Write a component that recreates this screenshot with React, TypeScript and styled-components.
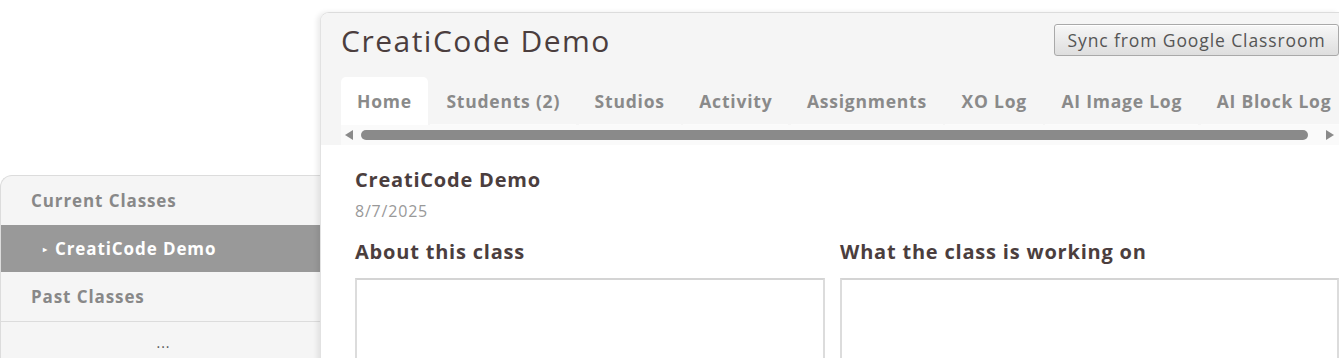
import React from "react";
import styled, { createGlobalStyle } from "styled-components";

const Global = createGlobalStyle`
  html, body { margin: 0; padding: 0; background: #fff; }
  body { font-family: "Open Sans", "Noto Sans", sans-serif; overflow: hidden; }
  * { box-sizing: border-box; }
`;

const Page = styled.div`
  display: flex;
  align-items: flex-start;
  width: 1339px;
  height: 358px;
  overflow: hidden;
`;

const Sidebar = styled.nav`
  width: 320px;
  flex: none;
  margin-top: 175px;
  background: #f5f5f5;
  border-top: 1px solid #dcdcdc;
  border-left: 1px solid #dcdcdc;
  border-top-left-radius: 12px;
  display: flex;
  flex-direction: column;
`;

const SideRow = styled.div<{ $active?: boolean; $h: number; $center?: boolean; $line?: boolean }>`
  height: ${(p) => p.$h}px;
  display: flex;
  align-items: center;
  justify-content: ${(p) => (p.$center ? "center" : "flex-start")};
  padding-left: ${(p) => (p.$center ? 0 : p.$active ? 42 : 30)}px;
  background: ${(p) => (p.$active ? "#999999" : "transparent")};
  color: ${(p) => (p.$active ? "#ffffff" : "#888888")};
  font-weight: 700;
  font-size: 17px;
  letter-spacing: 0.9px;
  border-bottom: ${(p) => (p.$line ? "1px solid #dcdcdc" : "none")};
`;

const Bullet = styled.span`
  font-size: 8px;
  margin-right: 8px;
  letter-spacing: 0;
  color: #fff;
`;

const Dots = styled.span`
  font-weight: 400;
  color: #555;
  font-size: 14px;
  letter-spacing: 1px;
  margin-left: 6px;
`;

const Main = styled.main`
  flex: 1;
  margin-top: 12px;
  min-width: 0;
  background: #fff;
  border-top: 1px solid #dcdcdc;
  border-left: 1px solid #e2e2e2;
  border-top-left-radius: 9px;
  box-shadow: -3px 0 5px rgba(0, 0, 0, 0.08);
  overflow: hidden;
  position: relative;
  z-index: 1;
`;

const Header = styled.header`
  background: #f5f5f5;
  padding-left: 20px;
`;

const TitleRow = styled.div`
  height: 64px;
  display: flex;
  align-items: flex-start;
  justify-content: space-between;
`;

const Title = styled.h1`
  margin: 9px 0 0;
  font-size: 30px;
  font-weight: 400;
  letter-spacing: 1.5px;
  color: #4b3e3e;
  line-height: 38px;
`;

const SyncButton = styled.button`
  margin-top: 11px;
  height: 32px;
  width: 285px;
  flex: none;
  border: 1px solid #a9a9a9;
  border-radius: 3px;
  background: linear-gradient(#f7f7f7, #dedede);
  font-family: inherit;
  font-size: 17.5px;
  color: #555;
  letter-spacing: 0.9px;
  padding: 0;
  box-shadow: inset 0 1px 0 #fff;
`;

const Tabs = styled.div`
  display: flex;
  gap: 2.5px;
  height: 48px;
  white-space: nowrap;
`;

const Tab = styled.div<{ $active?: boolean }>`
  padding: 0 16px;
  display: flex;
  align-items: center;
  font-size: 17.5px;
  font-weight: 700;
  letter-spacing: 0.78px;
  color: #8a8a8a;
  background: ${(p) => (p.$active ? "#ffffff" : "transparent")};
  border-top-left-radius: ${(p) => (p.$active ? "5px" : "0")};
  border-top-right-radius: ${(p) => (p.$active ? "5px" : "0")};
  border-bottom: 1px solid ${(p) => (p.$active ? "#ffffff" : "#fbfbfb")};
  flex: none;
`;

const ScrollTrack = styled.div`
  height: 20px;
  background: #fafafa;
  display: flex;
  align-items: center;
  gap: 8px;
  padding: 0 5px 0 4px;
`;

const Arrow = styled.span<{ $dir: "left" | "right" }>`
  width: 0;
  height: 0;
  flex: none;
  border-top: 5px solid transparent;
  border-bottom: 5px solid transparent;
  ${(p) => (p.$dir === "left" ? "border-right: 8px solid #8a8a8a;" : "border-left: 8px solid #8a8a8a;")}
`;

const Thumb = styled.div`
  flex: 1;
  height: 10px;
  border-radius: 5px;
  background: #8a8a8a;
  margin-right: 10px;
`;

const Content = styled.section`
  padding: 22px 0 0 34px;
`;

const ClassName = styled.h2`
  margin: 0;
  font-size: 20px;
  font-weight: 700;
  color: #4b3e3e;
  letter-spacing: 0.8px;
  line-height: 26px;
`;

const DateText = styled.div`
  margin-top: 8px;
  font-size: 16px;
  color: #999;
  letter-spacing: 0.8px;
  line-height: 20px;
`;

const Columns = styled.div`
  display: grid;
  grid-template-columns: 470px 1fr;
  column-gap: 15px;
  margin-top: 18px;
`;

const Column = styled.div`
  display: flex;
  flex-direction: column;
`;

const ColumnHeading = styled.h3`
  margin: 0 0 13px;
  font-size: 20px;
  font-weight: 700;
  color: #4b3e3e;
  letter-spacing: 0.8px;
  line-height: 26px;
`;

const TextBox = styled.textarea`
  height: 120px;
  border: 2px solid #dcdcdc;
  border-top-color: #d4d4d4;
  resize: none;
  background: #fff;
  font-family: inherit;
`;

const tabs = [
  "Home",
  "Students (2)",
  "Studios",
  "Activity",
  "Assignments",
  "XO Log",
  "AI Image Log",
  "AI Block Log",
];

export default function App() {
  return (
    <>
      <Global />
      <Page>
        <Sidebar>
          <SideRow $h={49}>Current Classes</SideRow>
          <SideRow $h={47} $active>
            <Bullet>▸</Bullet>CreatiCode Demo
          </SideRow>
          <SideRow $h={50} $line>Past Classes</SideRow>
          <SideRow $h={40} $center>
            <Dots>...</Dots>
          </SideRow>
        </Sidebar>
        <Main>
          <Header>
            <TitleRow>
              <Title>CreatiCode Demo</Title>
              <SyncButton>Sync from Google Classroom</SyncButton>
            </TitleRow>
            <Tabs>
              {tabs.map((t, i) => (
                <Tab key={t} $active={i === 0}>
                  {t}
                </Tab>
              ))}
            </Tabs>
            <ScrollTrack>
              <Arrow $dir="left" />
              <Thumb />
              <Arrow $dir="right" />
            </ScrollTrack>
          </Header>
          <Content>
            <ClassName>CreatiCode Demo</ClassName>
            <DateText>8/7/2025</DateText>
            <Columns>
              <Column>
                <ColumnHeading>About this class</ColumnHeading>
                <TextBox />
              </Column>
              <Column>
                <ColumnHeading>What the class is working on</ColumnHeading>
                <TextBox />
              </Column>
            </Columns>
          </Content>
        </Main>
      </Page>
    </>
  );
}
